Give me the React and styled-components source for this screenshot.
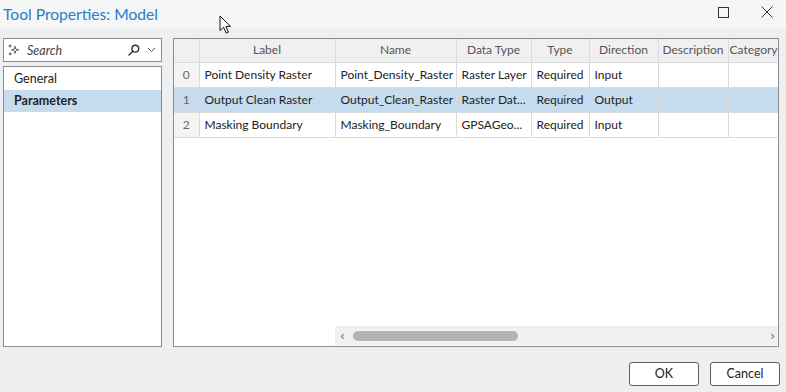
import React from 'react'
import styled, { createGlobalStyle } from 'styled-components'

const GlobalStyle = createGlobalStyle`
    html, body {
        margin:0;
        padding:0;
        background:#eeeff1;
    }
    body {
        font-family:Lato, "Noto Sans", sans-serif;
        color:#222;
    }
`

const columns = [
    { key: 'label', title: 'Label', width: 136 },
    { key: 'name', title: 'Name', width: 121 },
    { key: 'type', title: 'Data Type', width: 75 },
    { key: 'req', title: 'Type', width: 58 },
    { key: 'dir', title: 'Direction', width: 69 },
    { key: 'desc', title: 'Description', width: 70 },
    { key: 'cat', title: 'Category', width: 50 },
]

const rows = [
    { label: 'Point Density Raster', name: 'Point_Density_Raster', type: 'Raster Layer', req: 'Required', dir: 'Input', desc: '', cat: '' },
    { label: 'Output Clean Raster', name: 'Output_Clean_Raster', type: 'Raster Dat...', req: 'Required', dir: 'Output', desc: '', cat: '' },
    { label: 'Masking Boundary', name: 'Masking_Boundary', type: 'GPSAGeo...', req: 'Required', dir: 'Input', desc: '', cat: '' },
]

const SparkIcon = () => (
    <svg width="12" height="12" viewBox="0 0 12 12" fill="none" stroke="#444" strokeWidth="0.9">
        <path d="M7 2.2 C7.3 5 7.7 5.4 10.6 5.8 C7.7 6.2 7.3 6.6 7 9.4 C6.7 6.6 6.3 6.2 3.4 5.8 C6.3 5.4 6.7 5 7 2.2 Z" />
        <path d="M2 0.5 V3.5 M0.5 2 H3.5" />
        <path d="M2.2 8.4 V11.4 M0.7 9.9 H3.7" />
    </svg>
)

const MagnifierIcon = () => (
    <svg width="12" height="12" viewBox="0 0 12 12" fill="none" stroke="#333" strokeWidth="1.4">
        <circle cx="7.3" cy="4.7" r="3.4" />
        <path d="M4.8 7.2 L1 11" strokeLinecap="round" />
    </svg>
)

const ChevronIcon = () => (
    <svg width="9" height="6" viewBox="0 0 9 6" fill="none" stroke="#555" strokeWidth="1">
        <path d="M1 1 L4.5 4.5 L8 1" />
    </svg>
)

const Cursor = () => (
    <svg width="13" height="20" viewBox="0 0 13 20">
        <path d="M1 1 L1 15.5 L4.6 12.2 L7.2 18.2 L9.4 17.2 L6.9 11.4 L11.6 11.4 Z" fill="#fff" stroke="#111" strokeWidth="1" strokeLinejoin="round" />
    </svg>
)

const App = () => {
    return (
        <>
            <GlobalStyle />
            <Window>
                <TitleBar>
                    <Title>Tool Properties: Model</Title>
                    <CursorLayer><Cursor /></CursorLayer>
                    <WindowButtons>
                        <WinButton>
                            <svg width="11" height="11" viewBox="0 0 11 11" fill="none" stroke="#333" strokeWidth="1">
                                <rect x="0.5" y="0.5" width="10" height="10" />
                            </svg>
                        </WinButton>
                        <WinButton>
                            <svg width="12" height="12" viewBox="0 0 12 12" fill="none" stroke="#333" strokeWidth="1">
                                <path d="M0.5 0.5 L11.5 11.5 M11.5 0.5 L0.5 11.5" />
                            </svg>
                        </WinButton>
                    </WindowButtons>
                </TitleBar>

                <Body>
                    <Sidebar>
                        <SearchBox>
                            <SparkIcon />
                            <SearchText>Search</SearchText>
                            <MagnifierIcon />
                            <ChevronIcon />
                        </SearchBox>
                        <NavList>
                            <NavItem>General</NavItem>
                            <NavItem selected>Parameters</NavItem>
                        </NavList>
                    </Sidebar>

                    <TablePanel>
                        <GridArea>
                            <Grid>
                                <colgroup>
                                    <col style={{ width: 25 }} />
                                    {columns.map(c => <col key={c.key} style={{ width: c.width }} />)}
                                </colgroup>
                                <thead>
                                    <HeadRow>
                                        <HeadCell />
                                        {columns.map(c => <HeadCell key={c.key}>{c.title}</HeadCell>)}
                                    </HeadRow>
                                </thead>
                                <tbody>
                                    {rows.map((r, i) => (
                                        <Row key={i} selected={i === 1}>
                                            <IndexCell selected={i === 1}>{i}</IndexCell>
                                            {columns.map(c => <Cell key={c.key}>{r[c.key]}</Cell>)}
                                        </Row>
                                    ))}
                                </tbody>
                            </Grid>
                        </GridArea>
                        <ScrollRow>
                            <ScrollSpacer />
                            <ScrollTrack>
                                <Arrow>‹</Arrow>
                                <TrackInner>
                                    <Thumb />
                                </TrackInner>
                                <Arrow>›</Arrow>
                            </ScrollTrack>
                        </ScrollRow>
                    </TablePanel>
                </Body>

                <Footer>
                    <Button>OK</Button>
                    <Button>Cancel</Button>
                </Footer>
            </Window>
        </>
    )
}

export default App

const Window = styled.div`
    width:786px;
    height:392px;
    display:flex;
    flex-direction:column;
    background:#eeeff1;
    overflow:hidden;
`
const TitleBar = styled.div`
    position:relative;
    height:28px;
    flex-shrink:0;
    display:flex;
    align-items:center;
    justify-content:space-between;
    background:#f5f6f6;
    padding-left:3px;
`
const Title = styled.div`
    font-size:15.6px;
    color:#2b7cc4;
    margin-top:-1px;
`
const CursorLayer = styled.div`
    position:absolute;
    left:219px;
    top:15px;
    line-height:0;
`
const WindowButtons = styled.div`
    display:flex;
    align-items:center;
    gap:32px;
    padding-right:13px;
    margin-top:-4px;
`
const WinButton = styled.div`
    line-height:0;
`
const Body = styled.div`
    flex:1;
    display:flex;
    gap:11px;
    padding:10px 7px 0 3px;
    min-height:0;
`
const Sidebar = styled.div`
    width:159px;
    display:flex;
    flex-direction:column;
    gap:4px;
`
const SearchBox = styled.div`
    height:24px;
    box-sizing:border-box;
    border:1px solid #8c8c8c;
    background:#fff;
    display:flex;
    align-items:center;
    padding:0 5px 0 4px;
    gap:7px;
`
const SearchText = styled.span`
    flex:1;
    font-style:italic;
    font-size:12.5px;
    color:#444;
    margin-right:3px;
`
const NavList = styled.div`
    height:281px;
    box-sizing:border-box;
    border:1px solid #8c8c8c;
    background:#fff;
    padding-top:1px;
`
const NavItem = styled.div`
    height:22px;
    line-height:22px;
    padding-left:10px;
    font-size:12.5px;
    color:#222;
    font-weight:${p => p.selected ? 700 : 400};
    background:${p => p.selected ? '#c5dcef' : 'transparent'};
`
const TablePanel = styled.div`
    width:606px;
    height:309px;
    box-sizing:border-box;
    border:1px solid #8c8c8c;
    background:#fff;
    display:flex;
    flex-direction:column;
`
const GridArea = styled.div`
    flex:1;
    overflow:hidden;
`
const Grid = styled.table`
    table-layout:fixed;
    border-collapse:collapse;
    width:604px;
    font-size:12px;
    line-height:14px;
`
const HeadRow = styled.tr`
    height:23px;
`
const HeadCell = styled.th`
    padding:0 1px;
    background:#f0f0f0;
    color:#555;
    font-weight:400;
    text-align:center;
    white-space:nowrap;
    overflow:hidden;
    border-right:1px solid #dadada;
    border-bottom:1px solid #dadada;
`
const Row = styled.tr`
    height:25px;
    background:${p => p.selected ? '#c5dcef' : '#fff'};
`
const Cell = styled.td`
    padding:0 5px;
    white-space:nowrap;
    overflow:hidden;
    color:#222;
    border-right:1px solid #dadada;
    border-bottom:1px solid #dadada;
`
const IndexCell = styled.td`
    padding:0;
    text-align:center;
    color:#666;
    background:${p => p.selected ? '#c9dbea' : '#f4f4f5'};
    border-right:1px solid #dadada;
    border-bottom:1px solid #dadada;
`
const ScrollRow = styled.div`
    height:19px;
    display:flex;
    margin-bottom:1px;
`
const ScrollSpacer = styled.div`
    width:161px;
    background:#fff;
`
const ScrollTrack = styled.div`
    flex:1;
    background:#f0f0f0;
    display:flex;
    align-items:center;
    padding:0 3px 0 5px;
    gap:8px;
`
const Arrow = styled.span`
    font-family:"DejaVu Sans", sans-serif;
    font-size:12px;
    color:#666;
    line-height:1;
`
const TrackInner = styled.div`
    flex:1;
    display:flex;
    align-items:center;
`
const Thumb = styled.div`
    width:165px;
    height:10px;
    border-radius:5px;
    background:#b3b3b3;
`
const Footer = styled.div`
    height:45px;
    flex-shrink:0;
    box-sizing:border-box;
    display:flex;
    justify-content:flex-end;
    align-items:center;
    gap:11px;
    padding:8px 6px 0 0;
`
const Button = styled.button`
    width:70px;
    height:24px;
    box-sizing:border-box;
    border:1px solid #5c5c5c;
    border-radius:3px;
    background:#fff;
    font-family:Lato, "Noto Sans", sans-serif;
    font-size:12.5px;
    color:#222;
    padding:0;
`
